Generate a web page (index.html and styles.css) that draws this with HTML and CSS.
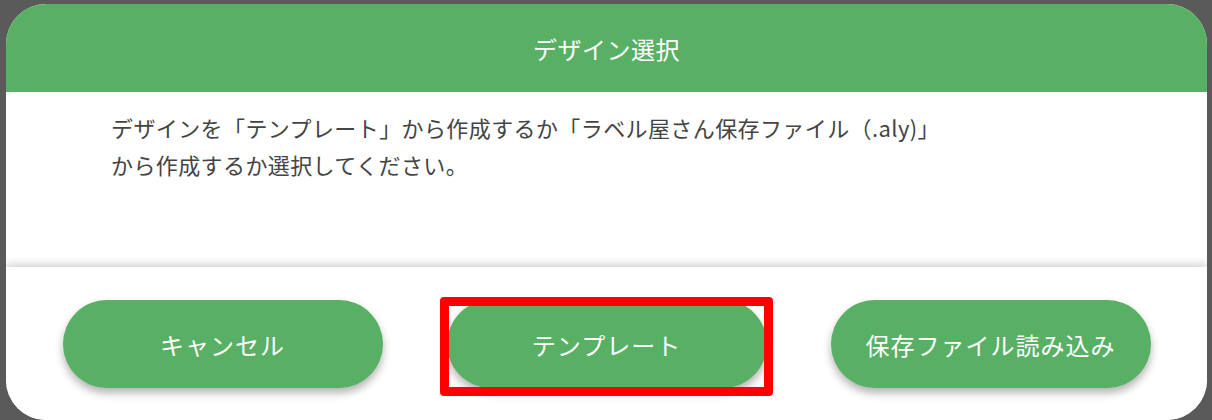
FILE: index.html
```html
<!DOCTYPE html>
<html lang="ja">
<head>
    <meta charset="UTF-8">
    <meta name="viewport" content="width=device-width, initial-scale=1.0">
    <title>デザイン選択</title>
    <link rel="stylesheet" href="styles.css">
</head>
<body>

<div class="dialog">
    <div class="dialog-header">デザイン選択</div>

    <div class="dialog-body">
        <p>デザインを「テンプレート」から作成するか「ラベル屋さん保存ファイル（.aly)」<br>から作成するか選択してください。</p>
    </div>

    <div class="dialog-footer">
        <button class="btn">キャンセル</button>
        <button class="btn highlight">テンプレート</button>
        <button class="btn">保存ファイル読み込み</button>
    </div>
</div>

</body>
</html>
```

FILE: styles.css
```css
body {
    margin: 0;
    padding: 4px 5px 0 6px;
    height: 420px;
    box-sizing: border-box;
    overflow: hidden;
    background-color: #5a5a5a;
    font-family: "Noto Sans CJK JP", "Noto Sans", sans-serif;
}

.dialog {
    height: 416px;
    background-color: white;
    border-radius: 40px;
    overflow: hidden;
    display: flex;
    flex-direction: column;
}

.dialog-header {
    height: 88px;
    flex-shrink: 0;
    background-color: #58b064;
    color: white;
    font-size: 24px;
    letter-spacing: 0.5px;
    display: flex;
    align-items: center;
    justify-content: center;
}

.dialog-body {
    height: 175px;
    flex-shrink: 0;
    padding: 17px 0 0 105px;
    box-sizing: border-box;
}

.dialog-body p {
    margin: 0;
    font-size: 22px;
    letter-spacing: 0.4px;
    line-height: 37px;
    color: #444;
}

.dialog-footer {
    position: relative;
    flex: 1;
    background-color: white;
    box-shadow: 0 -3px 8px rgba(0, 0, 0, 0.18);
    display: flex;
    justify-content: center;
    align-items: flex-start;
    gap: 64px;
    padding-top: 33px;
}

.btn {
    position: relative;
    width: 320px;
    height: 88px;
    border: none;
    border-radius: 44px;
    background-color: #58b064;
    color: white;
    font-family: inherit;
    font-size: 24px;
    letter-spacing: 1px;
    box-shadow: 0 5px 8px rgba(0, 0, 0, 0.3);
    cursor: pointer;
}

.highlight::after {
    content: "";
    position: absolute;
    top: -3px;
    left: -7px;
    right: -6px;
    bottom: -8px;
    border: 9px solid #ff0000;
    border-radius: 4px;
}
```
